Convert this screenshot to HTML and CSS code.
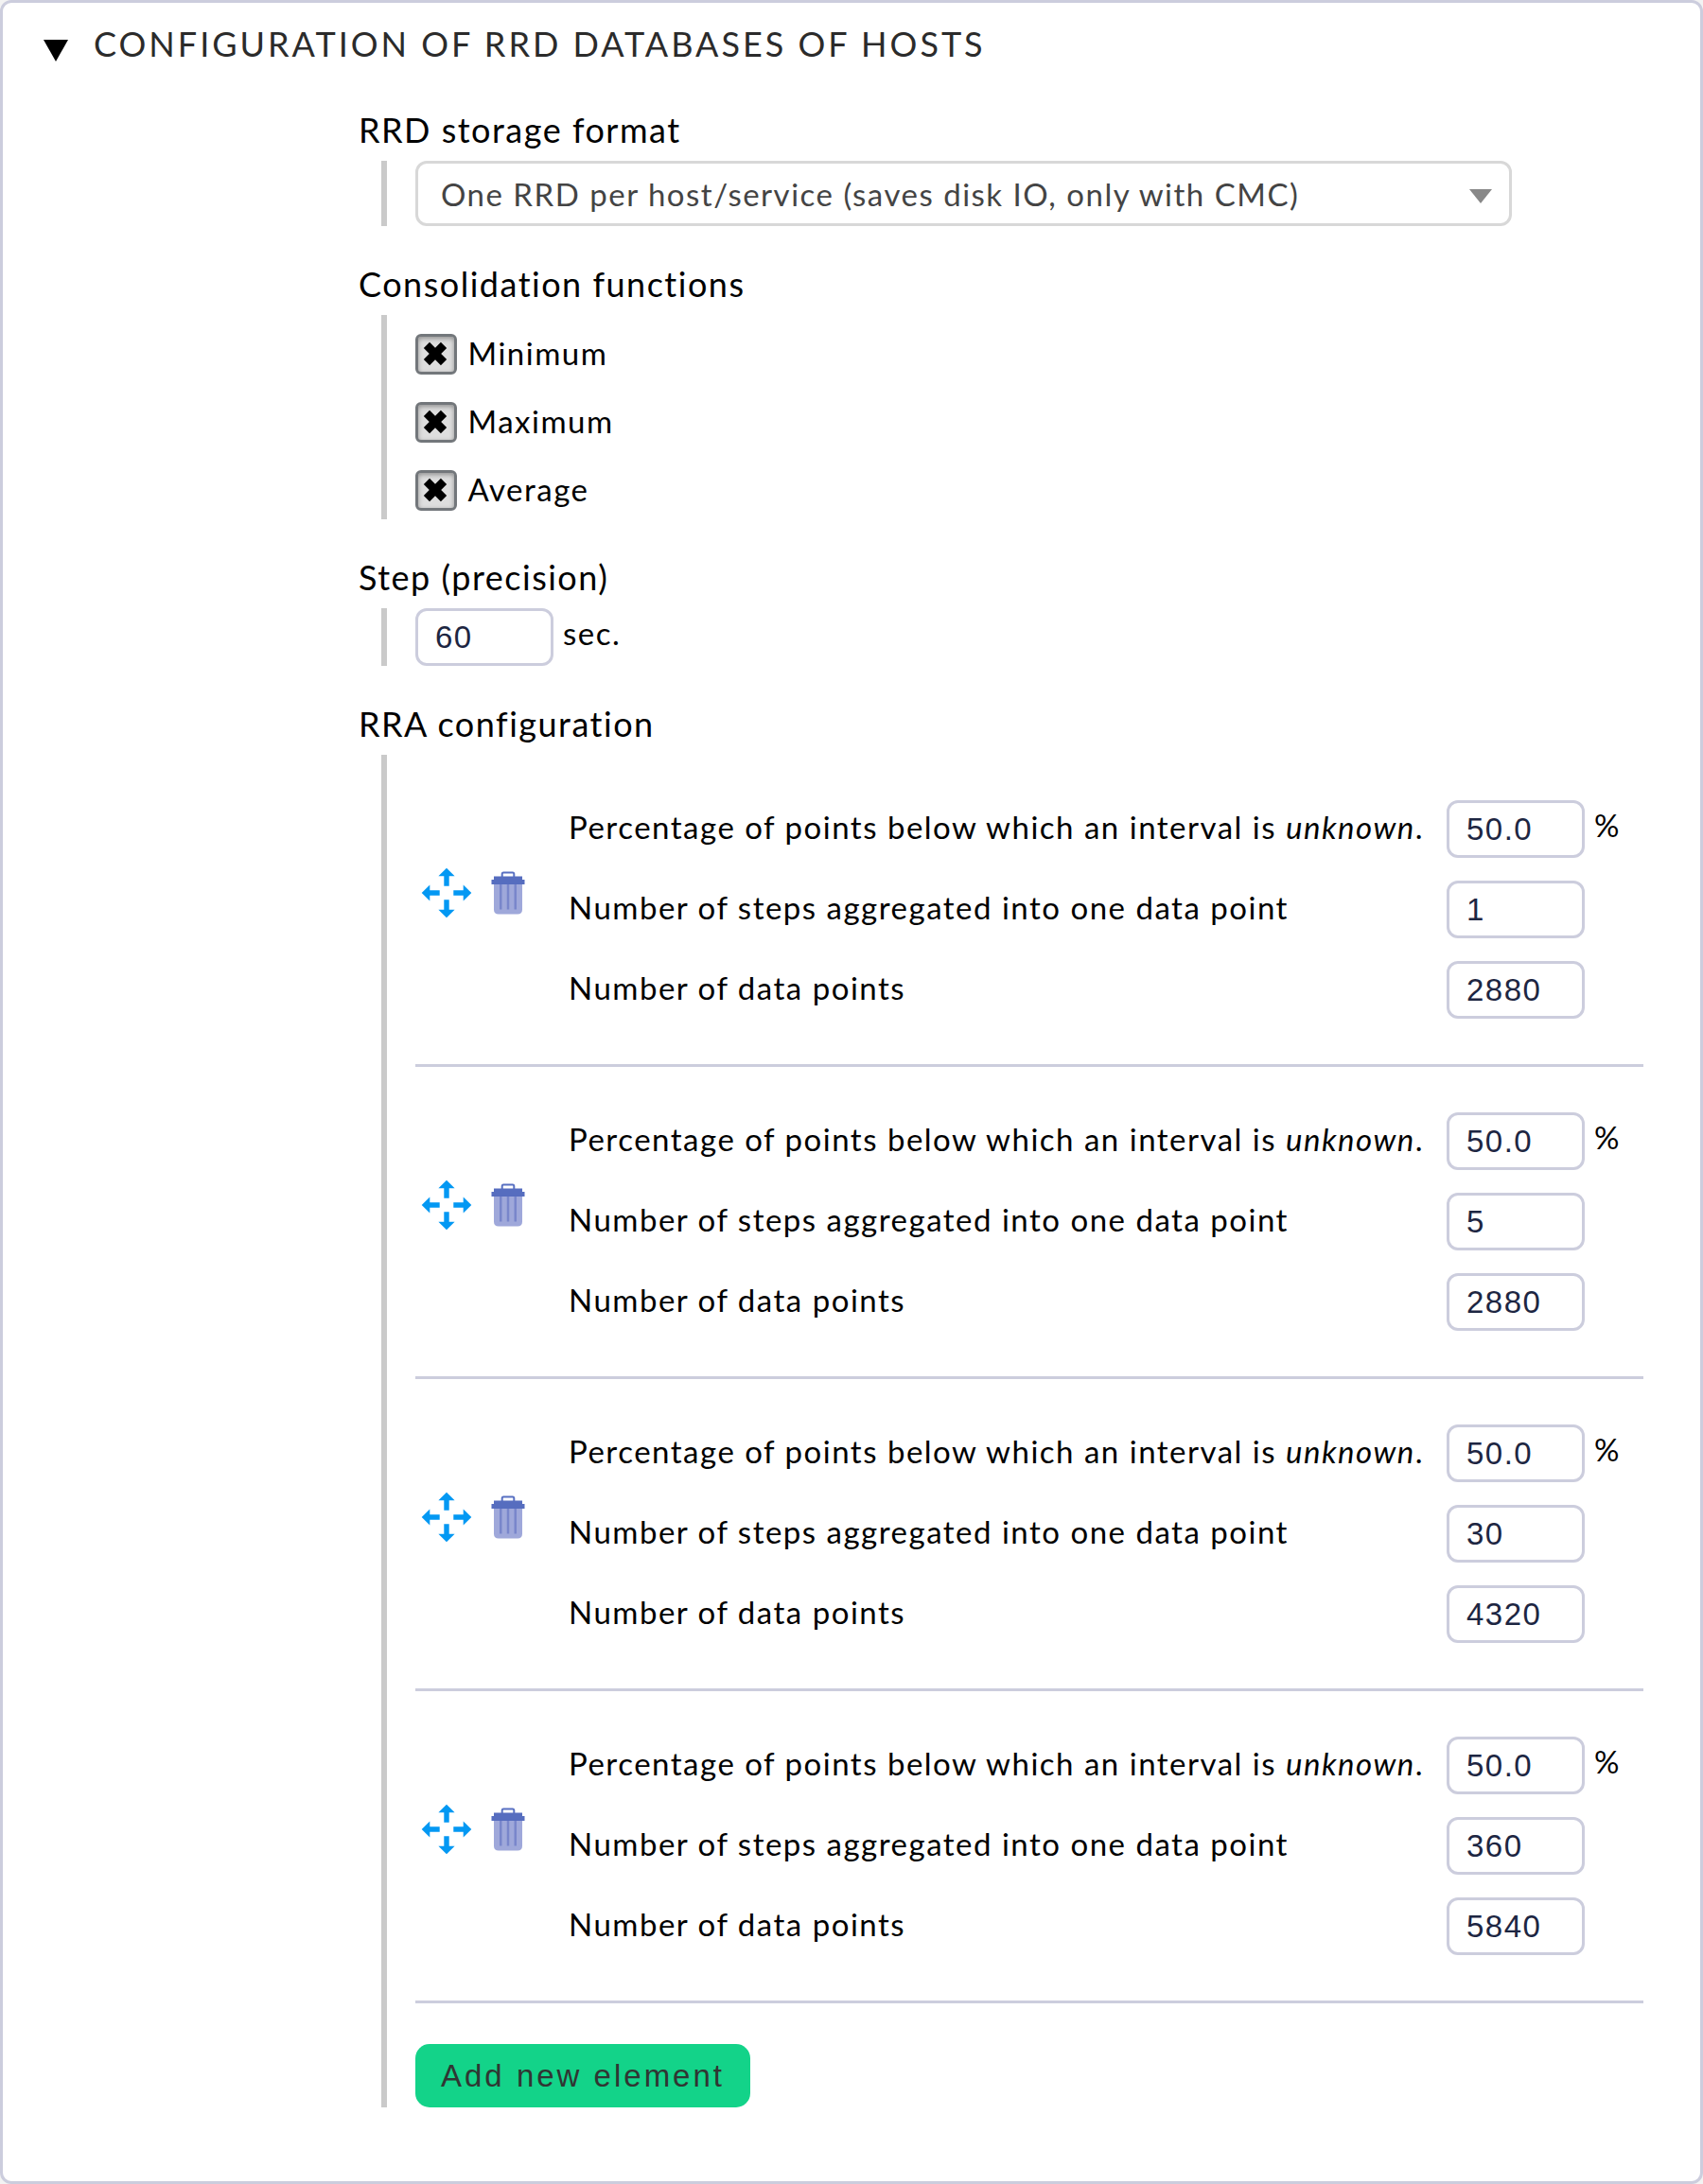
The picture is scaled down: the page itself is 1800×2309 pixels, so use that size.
FILE: index.html
```html
<!DOCTYPE html>
<html lang="en">
<head>
<meta charset="utf-8">
<title>Configuration of RRD databases of hosts</title>
<link rel="stylesheet" href="styles.css">
</head>
<body>
<svg class="defs" aria-hidden="true">
  <symbol id="move" viewBox="0 0 54 54">
    <path fill="#0398f3" d="M27 .7 35.6 9.3H29.7V19.7H24.3V9.3H18.4zM27 53.3 18.4 44.7H24.3V34.3H29.7V44.7H35.6zM.7 27 9.3 18.4V24.3H19.7V29.7H9.3V35.6zM53.3 27 44.7 35.6V29.7H34.3V24.3H44.7V18.4z"/>
  </symbol>
  <symbol id="trash" viewBox="0 0 36 48">
    <path fill="#9fa8da" d="M3 13H33V41.500Q33 46.500 28 46.500H8Q3 46.500 3 41.500z"/>
    <path fill="#7986cb" d="M9 14h2.500v27.500H9zM16.750 14h2.500v27.500h-2.500zM24.500 14H27v27.500h-2.500z"/>
    <path fill="none" stroke="#5870c2" stroke-width="2" d="M11.700 7V4Q11.700 2.500 13.200 2.500H22.800Q24.300 2.500 24.300 4V7"/>
    <path fill="#566dbf" d="M3 6.500H33V10H35.500V15H.5V10H3z"/>
  </symbol>
  <symbol id="cross" viewBox="-13 -13 26 26">
    <path fill="#000" transform="rotate(45)" d="M-4.400-12.800H4.400V-4.400H12.800V4.400H4.400V12.800H-4.400V4.400H-12.800V-4.400H-4.400z"/>
  </symbol>
</svg>

<main class="panel">
  <header class="panel-head">
    <svg class="fold" viewBox="0 0 26 23"><path d="M0 0H26L13 23z"/></svg>
    <h1 class="panel-title">CONFIGURATION OF RRD DATABASES OF HOSTS</h1>
  </header>

  <section class="field">
    <h2 class="field-title">RRD storage format</h2>
    <div class="field-body">
      <div class="select">
        <span>One RRD per host/service (saves disk IO, only with CMC)</span>
        <svg class="caret" viewBox="0 0 24 15"><path d="M0 0H24L12 15z"/></svg>
      </div>
    </div>
  </section>

  <section class="field">
    <h2 class="field-title">Consolidation functions</h2>
    <div class="field-body">
      <div class="check"><span class="box"><svg><use href="#cross"/></svg></span><span class="check-label">Minimum</span></div>
      <div class="check"><span class="box"><svg><use href="#cross"/></svg></span><span class="check-label">Maximum</span></div>
      <div class="check"><span class="box"><svg><use href="#cross"/></svg></span><span class="check-label">Average</span></div>
    </div>
  </section>

  <section class="field">
    <h2 class="field-title">Step (precision)</h2>
    <div class="field-body">
      <div class="entry"><input class="input" type="text" value="60"><span class="unit">sec.</span></div>
    </div>
  </section>

  <section class="field">
    <h2 class="field-title">RRA configuration</h2>
    <div class="field-body">
      <div class="rra">
        <svg class="move"><use href="#move"/></svg>
        <svg class="trash"><use href="#trash"/></svg>
        <div class="rows">
          <div class="row"><span class="label">Percentage of points below which an interval is <i>unknown</i>.</span><input class="input" type="text" value="50.0"><span class="unit">%</span></div>
          <div class="row"><span class="label">Number of steps aggregated into one data point</span><input class="input" type="text" value="1"></div>
          <div class="row"><span class="label">Number of data points</span><input class="input" type="text" value="2880"></div>
        </div>
      </div>
      <div class="rra">
        <svg class="move"><use href="#move"/></svg>
        <svg class="trash"><use href="#trash"/></svg>
        <div class="rows">
          <div class="row"><span class="label">Percentage of points below which an interval is <i>unknown</i>.</span><input class="input" type="text" value="50.0"><span class="unit">%</span></div>
          <div class="row"><span class="label">Number of steps aggregated into one data point</span><input class="input" type="text" value="5"></div>
          <div class="row"><span class="label">Number of data points</span><input class="input" type="text" value="2880"></div>
        </div>
      </div>
      <div class="rra">
        <svg class="move"><use href="#move"/></svg>
        <svg class="trash"><use href="#trash"/></svg>
        <div class="rows">
          <div class="row"><span class="label">Percentage of points below which an interval is <i>unknown</i>.</span><input class="input" type="text" value="50.0"><span class="unit">%</span></div>
          <div class="row"><span class="label">Number of steps aggregated into one data point</span><input class="input" type="text" value="30"></div>
          <div class="row"><span class="label">Number of data points</span><input class="input" type="text" value="4320"></div>
        </div>
      </div>
      <div class="rra">
        <svg class="move"><use href="#move"/></svg>
        <svg class="trash"><use href="#trash"/></svg>
        <div class="rows">
          <div class="row"><span class="label">Percentage of points below which an interval is <i>unknown</i>.</span><input class="input" type="text" value="50.0"><span class="unit">%</span></div>
          <div class="row"><span class="label">Number of steps aggregated into one data point</span><input class="input" type="text" value="360"></div>
          <div class="row"><span class="label">Number of data points</span><input class="input" type="text" value="5840"></div>
        </div>
      </div>
      <button class="add" type="button">Add new element</button>
    </div>
  </section>
</main>
</body>
</html>
```
FILE: styles.css
```css
* {
  box-sizing: border-box;
}

body {
  margin: 0;
  background: #f3f3f3;
  color: #000;
  font: 33px/40px Lato, sans-serif;
  letter-spacing: 1.5px;
}

.defs {
  display: none;
}

.panel {
  height: 2309px;
  background: #fff;
  border: 3px solid #cccddd;
  border-radius: 12px;
}

.panel-head {
  display: flex;
  height: 73px;
  padding: 21px 0 0 43px;
}

.fold {
  width: 26px;
  height: 23px;
  margin: 18px 27px 0 0;
}

.panel-title {
  margin: 0;
  color: #2b2b2b;
  font-size: 36px;
  font-weight: 400;
  line-height: 44px;
  letter-spacing: 3px;
}

.field {
  padding: 39px 0 0 376px;
}

.field-title {
  margin: 0 0 11px;
  font-size: 36px;
  font-weight: 400;
  line-height: 44px;
}

.field-body {
  width: 1334px;
  margin-left: 24px;
  padding-left: 30px;
  border-left: 6px solid #cacaca;
}

.select {
  display: flex;
  justify-content: space-between;
  width: 1159px;
  height: 69px;
  padding: 1px 18px 0 24px;
  border: 3px solid #d8d8d8;
  border-radius: 12px;
  color: #444;
  line-height: 62px;
}

.caret {
  width: 24px;
  height: 15px;
  margin-top: 26px;
  fill: #888;
}

.check {
  display: flex;
  gap: 11.5px;
  height: 72px;
  padding-top: 20px;
}

.box {
  width: 44px;
  height: 43px;
  padding: 5px;
  border: 3px solid #73777b;
  border-radius: 6px;
  background: #dedede;
  box-shadow: inset 0 2px 5px rgba(0, 0, 0, .35);
}

.box svg {
  display: block;
  width: 26px;
  height: 26px;
}

.entry,
.row {
  display: flex;
}

.input {
  width: 146px;
  height: 61px;
  margin: 0;
  padding: 0 18px;
  border: 3px solid #cccddd;
  border-radius: 12px;
  background: #fff;
  color: #1d2642;
  font: 33px "Liberation Sans", Arial, sans-serif;
  letter-spacing: 1.5px;
}

.unit {
  margin-left: 10px;
  line-height: 52px;
}

.rra {
  display: flex;
  padding: 48px 0;
  border-bottom: 3px solid #cccddd;
}

.move {
  width: 54px;
  height: 54px;
  margin: 71px 20px 0 6px;
}

.trash {
  width: 36px;
  height: 48px;
  margin: 74px 46px 0 0;
}

.rows {
  display: flex;
  flex-direction: column;
  gap: 24px;
}

.label {
  width: 928px;
  line-height: 56px;
  white-space: nowrap;
}

.add {
  display: block;
  width: 354px;
  height: 67px;
  margin: 43px 0 0;
  padding: 0 27px;
  border: 0;
  border-radius: 15px;
  background: #13d389;
  color: #303633;
  font: 33px "Liberation Sans", Arial, sans-serif;
  letter-spacing: 3px;
  text-align: left;
}
```
